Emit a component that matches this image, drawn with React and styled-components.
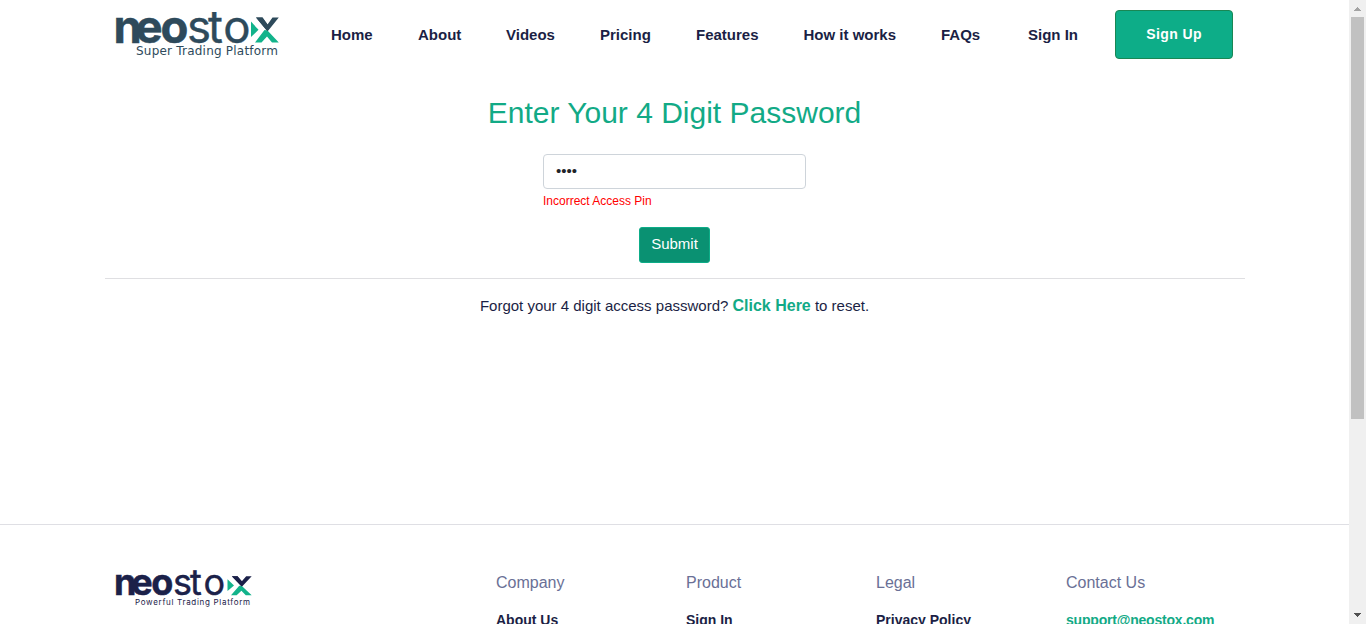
import React from 'react';
import styled, { createGlobalStyle } from 'styled-components';

const GlobalStyle = createGlobalStyle`
  * { box-sizing: border-box; }
  body {
    margin: 0;
    background: #fff;
    color: #1b1f45;
    font-family: "Liberation Sans", Arial, sans-serif;
    font-size: 15px;
    overflow: hidden;
  }
`;

const Shell = styled.div`
  display: flex;
  height: 624px;
  overflow: hidden;
`;

const Page = styled.div`
  flex: 1;
  min-width: 0;
  height: 624px;
  overflow: hidden;
  display: flex;
  flex-direction: column;
`;

const Header = styled.header`
  display: flex;
  height: 70px;
  flex: none;
  padding-left: 115px;
`;

const HeaderLogo = styled.svg`
  width: 166px;
  height: 60px;
  flex: none;
  display: block;
  overflow: visible;
`;

const Nav = styled.nav`
  display: flex;
  align-items: center;
  height: 70px;
  margin-left: 50px;
`;

const NavLink = styled.a`
  color: #1b1f45;
  font-size: 15px;
  font-weight: 700;
  line-height: 20px;
  white-space: nowrap;
  width: ${(p) => p.$width}px;
`;

const SignUp = styled.a`
  width: 118px;
  height: 49px;
  margin-top: 10px;
  border: 1px solid #198754;
  border-radius: 4px;
  background: #0dad88;
  color: #fff;
  font-size: 14px;
  font-weight: 700;
  letter-spacing: 0.4px;
  line-height: 47px;
  text-align: center;
`;

const Main = styled.main`
  height: 454px;
  flex: none;
  display: flex;
  flex-direction: column;
  align-items: center;
`;

const Title = styled.h1`
  margin: 25px 0 0;
  color: #12aa86;
  font-size: 30px;
  font-weight: 400;
  line-height: 36px;
  white-space: nowrap;
`;

const Form = styled.form`
  width: 263px;
  margin-top: 23px;
  display: flex;
  flex-direction: column;
`;

const PinInput = styled.input`
  height: 35px;
  border: 1px solid #ced4da;
  border-radius: 4px;
  padding: 5px 12px 7px;
  color: #212529;
  background: #fff;
  font-family: "Liberation Sans", Arial, sans-serif;
  font-size: 15px;
  outline: none;
`;

const ErrorText = styled.span`
  margin-top: 4px;
  color: #f00;
  font-size: 12px;
  line-height: 16px;
`;

const Submit = styled.button`
  align-self: center;
  width: 71px;
  height: 36px;
  margin-top: 18px;
  padding: 0 0 3px;
  border: 1px solid #0dad88;
  border-radius: 3px;
  background: #0a9172;
  color: #fff;
  font-family: "Liberation Sans", Arial, sans-serif;
  font-size: 15px;
`;

const Divider = styled.hr`
  width: 1140px;
  height: 1px;
  margin: 15px 0 0;
  border: 0;
  background: #dfdfe2;
`;

const Forgot = styled.p`
  margin: 15px 0 0;
  line-height: 24px;
  white-space: nowrap;
`;

const ResetLink = styled.a`
  color: #12aa86;
  font-size: 16px;
  font-weight: 700;
`;

const Footer = styled.footer`
  flex: none;
  height: 200px;
  border-top: 1px solid #dfdfe4;
  padding: 40px 0 0 115px;
  display: grid;
  grid-template-columns: 381px 190px 190px 190px 1fr;
`;

const FooterLogo = styled.svg`
  width: 140px;
  height: 46px;
  display: block;
  overflow: visible;
`;

const Column = styled.div`
  display: flex;
  flex-direction: column;
  padding-top: 8px;
`;

const ColumnTitle = styled.h2`
  margin: 0;
  color: #6a7096;
  font-size: 16px;
  font-weight: 400;
  line-height: 20px;
`;

const FooterLink = styled.a`
  margin-top: 17px;
  color: ${(p) => (p.$accent ? '#12aa86' : '#1b1f45')};
  font-size: 14px;
  font-weight: 700;
  line-height: 20px;
  letter-spacing: ${(p) => p.$spacing || 0}px;
`;

const Scrollbar = styled.div`
  width: 17px;
  height: 624px;
  flex: none;
  background: #f0f0f0;
  display: flex;
  flex-direction: column;
  align-items: center;
`;

const ScrollArrow = styled.svg`
  width: 17px;
  height: 17px;
  display: block;
  flex: none;
`;

const Thumb = styled.div`
  width: 13px;
  height: 402px;
  margin-bottom: auto;
  background: #c1c1c1;
`;

const Word = styled.text`
  font-family: Inter, "Open Sans", sans-serif;
  font-weight: ${(p) => (p.$bold ? 700 : 400)};
  stroke: currentColor;
  stroke-width: ${(p) => (p.$bold ? 0.5 : 0.4)}px;
  fill: currentColor;
`;

function Mark({ dark }) {
  return (
    <>
      <path d="M0 4 L7.5 12.2 L0 19.5 Z" fill="#12b38b" />
      <path d="M5 0 H11.5 L16.5 6.8 L21.5 0 H27.8 L16.5 13.8 Z" fill={dark} />
      <path d="M16.5 13 L27.8 25 H21 L16 19 L10.5 25 H4 L13.5 12.5 Z" fill="#12b38b" />
      <path d="M5 0 H11.5 L18 9 L16.3 13.4 Z" fill={dark} />
    </>
  );
}

const NAV = [
  ['Home', 87],
  ['About', 88],
  ['Videos', 94],
  ['Pricing', 96],
  ['Features', 107.5],
  ['How it works', 137.5],
  ['FAQs', 87],
  ['Sign In', 87],
];

const FOOTER = [
  { title: 'Company', link: 'About Us' },
  { title: 'Product', link: 'Sign In' },
  { title: 'Legal', link: 'Privacy Policy' },
  { title: 'Contact Us', link: 'support@neostox.com', accent: true, spacing: -0.2 },
];

export default function App() {
  return (
    <>
      <GlobalStyle />
      <Shell>
        <Page>
          <Header>
            <HeaderLogo viewBox="0 0 166 60">
              <g color="#2e4a5b" fontSize="45.5">
                <Word $bold x="-1.5 20.5 45.5" y="42.7">neo</Word>
                <Word x="72 93 108.3" y="42.7">sto</Word>
              </g>
              <g transform="translate(136 17.6)"><Mark dark="#2e4a5b" /></g>
              <text x="21" y="55" fill="#2e4a5b" fontFamily="DejaVu Sans, sans-serif" fontSize="12" textLength="142">Super Trading Platform</text>
            </HeaderLogo>
            <Nav>
              {NAV.map(([label, width]) => (
                <NavLink key={label} $width={width}>{label}</NavLink>
              ))}
            </Nav>
            <SignUp>Sign Up</SignUp>
          </Header>
          <Main>
            <Title>Enter Your 4 Digit Password</Title>
            <Form>
              <PinInput type="password" defaultValue="1234" />
              <ErrorText>Incorrect Access Pin</ErrorText>
              <Submit type="button">Submit</Submit>
            </Form>
            <Divider />
            <Forgot>
              Forgot your 4 digit access password? <ResetLink>Click Here</ResetLink> to reset.
            </Forgot>
          </Main>
          <Footer>
            <FooterLogo viewBox="0 0 140 46">
              <g color="#1b2149" fontSize="36">
                <Word $bold x="-1 16.2 36.3" y="29.8">neo</Word>
                <Word x="58 75 88.5" y="29.8">sto</Word>
              </g>
              <g transform="translate(112.5 11.2) scale(0.87 0.76)"><Mark dark="#1b2149" /></g>
              <text x="20" y="40" fill="#1b2149" fontFamily="Inter, sans-serif" fontSize="8" textLength="115">Powerful Trading Platform</text>
            </FooterLogo>
            {FOOTER.map((c) => (
              <Column key={c.title}>
                <ColumnTitle>{c.title}</ColumnTitle>
                <FooterLink $accent={c.accent} $spacing={c.spacing}>{c.link}</FooterLink>
              </Column>
            ))}
          </Footer>
        </Page>
        <Scrollbar>
          <ScrollArrow viewBox="0 0 17 17" shapeRendering="crispEdges">
            <path d="M8 7h1v1h1v1h1v1h1v1H5v-1h1V9h1V8h1z" fill="#a3a3a3" />
          </ScrollArrow>
          <Thumb />
          <ScrollArrow viewBox="0 0 17 17" shapeRendering="crispEdges">
            <path d="M5 6h7v1h-1v1h-1v1H9v1H8V9H7V8H6V7H5z" fill="#505050" />
          </ScrollArrow>
        </Scrollbar>
      </Shell>
    </>
  );
}
